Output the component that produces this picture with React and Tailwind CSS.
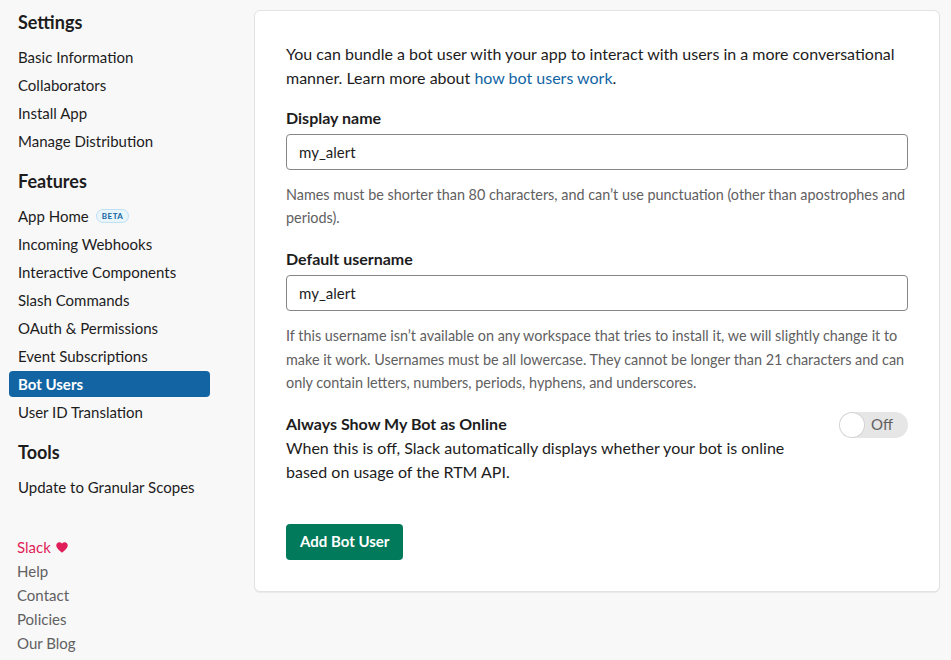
import React, { useState } from 'react';

const settingsLinks = ['Basic Information', 'Collaborators', 'Install App', 'Manage Distribution'];
const featureLinks = [
  'App Home',
  'Incoming Webhooks',
  'Interactive Components',
  'Slash Commands',
  'OAuth & Permissions',
  'Event Subscriptions',
  'Bot Users',
  'User ID Translation'
];
const footerLinks = ['Help', 'Contact', 'Policies', 'Our Blog'];

const NavItem = ({ label, active }) => (
  <div className="h-[28px] py-[1px]">
    <div
      className={`h-[26px] flex items-center px-[9px] rounded-[4px] text-[15px] ${
        active ? 'bg-[#1264a3] text-white font-bold' : 'text-[#1d1c1d]'
      }`}
    >
      {label}
      {label === 'App Home' && (
        <span className="ml-[7px] h-[14px] px-[5px] flex items-center rounded-full border border-[#bfe0f5] bg-[#e8f5fa] text-[#1264a3] text-[8px] font-bold tracking-[0.5px]">
          BETA
        </span>
      )}
    </div>
  </div>
);

const SectionTitle = ({ children, first }) => (
  <h2 className={`${first ? 'pt-[10px]' : 'pt-[14px]'} pb-[9px] leading-[24px] px-[18px] text-[18px] font-bold text-[#1d1c1d]`}>
    {children}
  </h2>
);

export default function App() {
  const [online, setOnline] = useState(false);
  const [displayName, setDisplayName] = useState('my_alert');
  const [username, setUsername] = useState('my_alert');

  return (
    <div
      className="min-h-[660px] bg-[#f8f8f8] flex"
      style={{ fontFamily: 'Lato, "Noto Sans", sans-serif' }}
    >
      <aside className="w-[254px] shrink-0">
        <SectionTitle first>Settings</SectionTitle>
        <nav className="px-[9px] mr-[35px]">
          {settingsLinks.map((l) => (
            <NavItem key={l} label={l} />
          ))}
        </nav>
        <SectionTitle>Features</SectionTitle>
        <nav className="px-[9px] mr-[35px]">
          {featureLinks.map((l) => (
            <NavItem key={l} label={l} active={l === 'Bot Users'} />
          ))}
        </nav>
        <SectionTitle>Tools</SectionTitle>
        <nav className="px-[9px] mr-[35px]">
          <NavItem label="Update to Granular Scopes" />
        </nav>
        <div className="pt-[34px] px-[17px] text-[15px] leading-[24px]">
          <div className="text-[#e01e5a] flex items-center gap-[5px]">
            Slack
            <svg width="12" height="11" viewBox="0 0 24 22" fill="#e01e5a">
              <path d="M12 21.5 10.3 20C4.2 14.5 0.5 11.1 0.5 6.8 0.5 3.3 3.2 0.5 6.7 0.5c2 0 3.9 0.9 5.3 2.4C13.4 1.4 15.3 0.5 17.3 0.5c3.5 0 6.2 2.8 6.2 6.3 0 4.3-3.7 7.7-9.8 13.2L12 21.5z" />
            </svg>
          </div>
          {footerLinks.map((l) => (
            <div key={l} className="text-[#616061]">{l}</div>
          ))}
        </div>
      </aside>

      <main className="pt-[10px]">
        <div className="w-[686px] bg-white border border-[#e2e2e2] rounded-[6px] shadow-[0_1px_1px_rgba(0,0,0,0.06)] px-[31px] pt-[31px] pb-[31px] text-[#1d1c1d]">
          <p className="text-[16px] leading-[24px]">
            You can bundle a bot user with your app to interact with users in a more conversational manner. Learn more about{' '}
            <a className="text-[#1264a3]">how bot users work</a>.
          </p>

          <label className="block mt-[16px] text-[16px] leading-[24px] font-bold">Display name</label>
          <input
            value={displayName}
            onChange={(e) => setDisplayName(e.target.value)}
            className="mt-[4px] w-full h-[36px] border border-[#868686] rounded-[4px] px-[12px] text-[15px] text-[#1d1c1d] outline-none"
          />
          <p className="mt-[13px] text-[14.4px] leading-[23px] text-[#616061]">
            Names must be shorter than 80 characters, and can’t use punctuation (other than apostrophes and periods).
          </p>

          <label className="block mt-[18px] text-[16px] leading-[24px] font-bold">Default username</label>
          <input
            value={username}
            onChange={(e) => setUsername(e.target.value)}
            className="mt-[4px] w-full h-[36px] border border-[#868686] rounded-[4px] px-[12px] text-[15px] text-[#1d1c1d] outline-none"
          />
          <p className="mt-[13px] text-[14.4px] leading-[23.5px] text-[#616061]">
            If this username isn’t available on any workspace that tries to install it, we will slightly change it to make it work. Usernames must be all lowercase. They cannot be longer than 21 characters and can only contain letters, numbers, periods, hyphens, and underscores.
          </p>

          <div className="mt-[17px] flex justify-between items-start">
            <div className="w-[520px] text-[16px] leading-[24px]">
              <div className="font-bold">Always Show My Bot as Online</div>
              <div>
                When this is off, Slack automatically displays whether your bot is online based on usage of the RTM API.
              </div>
            </div>
            <button
              onClick={() => setOnline(!online)}
              className="w-[69px] h-[26px] rounded-full bg-[#e6e6e6] flex items-center justify-between pl-[1px] pr-[15px]"
            >
              <span className="w-[24px] h-[24px] rounded-full bg-white shadow-[0_0_0_1px_rgba(0,0,0,0.08)]" />
              <span className="text-[15px] text-[#616061]">{online ? 'On' : 'Off'}</span>
            </button>
          </div>

          <button className="mt-[40px] h-[36px] px-[14px] rounded-[4px] bg-[#007a5a] text-white text-[15px] font-bold">
            Add Bot User
          </button>
        </div>
      </main>
    </div>
  );
}
